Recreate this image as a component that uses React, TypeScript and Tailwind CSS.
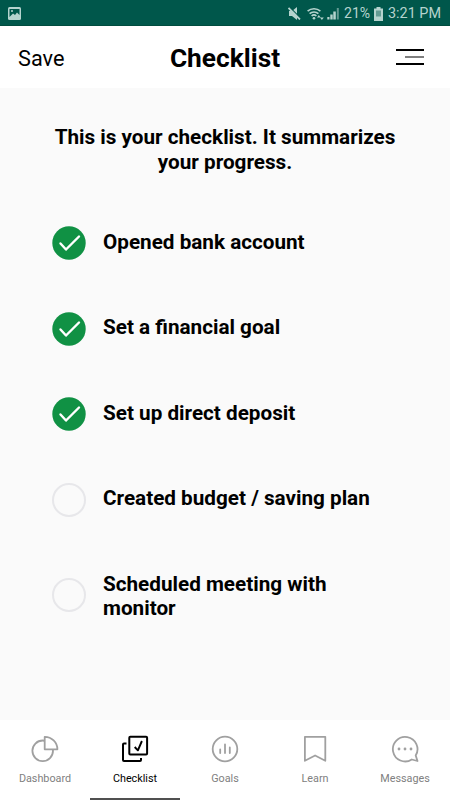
import type { ReactNode } from "react";

const ITEMS = [
  { label: "Opened bank account", done: true },
  { label: "Set a financial goal", done: true },
  { label: "Set up direct deposit", done: true },
  { label: "Created budget / saving plan", done: false },
  { label: "Scheduled meeting with monitor", done: false, tall: true },
];

function StatusBar() {
  return (
    <div className="flex h-[26px] items-center border-b border-[#004c3f] bg-[#00574b] pt-[2px] pr-[10px] pl-2 text-[#b5d3ce]">
      <svg width="13" height="13" viewBox="0 0 13 13">
        <rect width="13" height="13" rx="1.5" fill="currentColor" />
        <path d="M1.5 2h10v6L9 5.5 7 8 5 6.5 1.5 10z" fill="#00574b" />
        <circle cx="4" cy="4" r="1" fill="currentColor" />
      </svg>
      <div className="ml-auto flex items-center">
        <svg width="13" height="13" viewBox="0 0 13 13" className="mr-[6px]">
          <path d="M1 4h3l5-4v13L4 9H1z" fill="currentColor" />
          <path d="M1.500 0 13 11.500" stroke="#00574b" strokeWidth="1.200" />
          <path d="M.5 1 12 12.500" stroke="currentColor" strokeWidth="1.800" />
        </svg>
        <svg width="18" height="14" viewBox="0 0 18 14" className="mr-[2px]">
          <g fill="none" stroke="currentColor" strokeWidth="1.600">
            <path d="M.6 4.200a9.500 9.500 0 0 1 12.800 0" />
            <path d="M2.600 6.700a6.500 6.500 0 0 1 8.800 0" />
            <path d="M4.600 9a3.500 3.500 0 0 1 4.800 0" />
          </g>
          <circle cx="7" cy="11.300" r="1.300" fill="currentColor" />
          <path d="m10 10.500 1.800-2.500 1.800 2.500zM13 10.500h3.800L14.900 13z" fill="currentColor" />
        </svg>
        <svg width="13" height="13" viewBox="0 0 13 13" className="mr-[4px]">
          <path d="M.3 10h2.200v2.500H.3zM3.300 7.500h2.400v5H3.300zM6.300 4.500h2.500v8H6.300z" fill="currentColor" />
          <path d="M9.800 1h2v11.500h-2z" fill="currentColor" opacity=".55" />
        </svg>
        <span className="mt-px inline-block w-[27px] origin-left scale-x-[0.91] text-[15.5px] leading-none whitespace-nowrap">
          21%
        </span>
        <svg width="9" height="14" viewBox="0 0 9 14" className="mr-[5px] ml-[3px]">
          <path d="M2.500 0h4v1.500H9V14H0V1.500h2.500z" fill="currentColor" />
          <path d="M2 3.500h5v6H2z" fill="#00574b" opacity=".45" />
        </svg>
        <span className="mt-px inline-block w-[52px] origin-left scale-x-[0.93] text-[15.5px] leading-none whitespace-nowrap">
          3:21 PM
        </span>
      </div>
    </div>
  );
}

function Header() {
  return (
    <header className="grid h-[62px] grid-cols-3 items-center bg-white px-[18px] pt-[2px]">
      <button type="button" className="pt-[2px] text-left text-[21.7px]">
        Save
      </button>
      <h1 className="pt-[2px] text-center text-[26.3px] font-bold">Checklist</h1>
      <button type="button" className="mr-2 justify-self-end pb-[2px]" aria-label="Menu">
        <svg width="28" height="18" viewBox="0 0 28 18" fill="none" stroke="#000">
          <path d="M0 2h28M0 16h28" strokeWidth="2" />
          <path d="M9 9h19" stroke="#555" strokeWidth="1.500" />
        </svg>
      </button>
    </header>
  );
}

function Mark({ done, tall }: { done: boolean; tall?: boolean }) {
  if (!done) {
    return (
      <span
        className={`h-[34px] w-[34px] shrink-0 rounded-full border-2 border-[#e7e7ea] ${
          tall ? "mb-[2px]" : "mt-[3px]"
        }`}
      />
    );
  }
  return (
    <svg width="34" height="34" viewBox="0 0 34 34" className="mt-[3px] shrink-0">
      <circle cx="17" cy="17" r="16.700" fill="#109144" />
      <path
        d="m8.500 17.500 5.500 6L27 10.500"
        fill="none"
        stroke="#fff"
        strokeWidth="2.400"
        strokeLinecap="round"
        strokeLinejoin="round"
      />
    </svg>
  );
}

function Tab({ label, active, children }: { label: string; active?: boolean; children: ReactNode }) {
  return (
    <button
      type="button"
      className={`flex flex-col items-center border-b-[2.5px] pt-[14px] ${
        active ? "border-[#505050] text-black" : "border-transparent text-[#808080]"
      }`}
    >
      <svg
        width="30"
        height="30"
        viewBox="0 0 30 30"
        fill="none"
        stroke={active ? "#000" : "#a0a0a0"}
        strokeWidth="1.800"
        strokeLinejoin="round"
      >
        {children}
      </svg>
      <span className="mt-[8px] text-[10.8px] leading-[14px]">{label}</span>
    </button>
  );
}

export default function App() {
  return (
    <div className="flex h-[800px] w-[450px] flex-col overflow-hidden bg-[#fafafa] font-['Roboto',sans-serif] text-black">
      <StatusBar />
      <Header />
      <main className="flex-1">
        <p className="mx-auto mt-[37px] w-[360px] text-center text-[20.7px] leading-[24.5px] font-bold">
          This is your checklist. It summarizes your progress.
        </p>
        <ul className="mt-[25px] pl-[52px]">
          {ITEMS.map((item) => (
            <li key={item.label} className="flex items-center">
              <Mark done={item.done} tall={item.tall} />
              <span className="ml-[17px] w-[280px] py-[30.5px] text-[20.7px] leading-[24.5px] font-bold">
                {item.label}
              </span>
            </li>
          ))}
        </ul>
      </main>
      <nav className="grid h-[80px] grid-cols-5 bg-white">
        <Tab label="Dashboard">
          <circle cx="12.700" cy="16.800" r="10.300" />
          <path d="M14.700 2.800V15.300h12.700A12.600 12.600 0 0 0 14.700 2.800z" fill="#fff" />
        </Tab>
        <Tab label="Checklist" active>
          <rect x="9.300" y="2.800" width="17.800" height="17.800" rx="1" strokeWidth="2" />
          <path d="M6.500 9.500H4a1 1 0 0 0-1 1V26a1 1 0 0 0 1 1h16a1 1 0 0 0 1-1v-2" strokeWidth="2" />
          <path d="m14.700 13 3.200 3.300 4-9.300" strokeWidth="1.900" />
        </Tab>
        <Tab label="Goals">
          <circle cx="15" cy="15" r="12.300" />
          <path d="M10.200 15.500v3.500M15 10.500v8.500M19.800 13.500v5.500" strokeLinecap="round" />
        </Tab>
        <Tab label="Learn">
          <path d="M4.900 2.800h20.400v24l-10.200-5.300-10.200 5.300z" />
        </Tab>
        <Tab label="Messages">
          <path d="M25.700 21.500A12.300 12.300 0 1 0 21.800 25.500L27.500 27z" />
          <path d="M9 15h.01M15 15h.01M21 15h.01" strokeWidth="2.800" strokeLinecap="round" />
        </Tab>
      </nav>
    </div>
  );
}
